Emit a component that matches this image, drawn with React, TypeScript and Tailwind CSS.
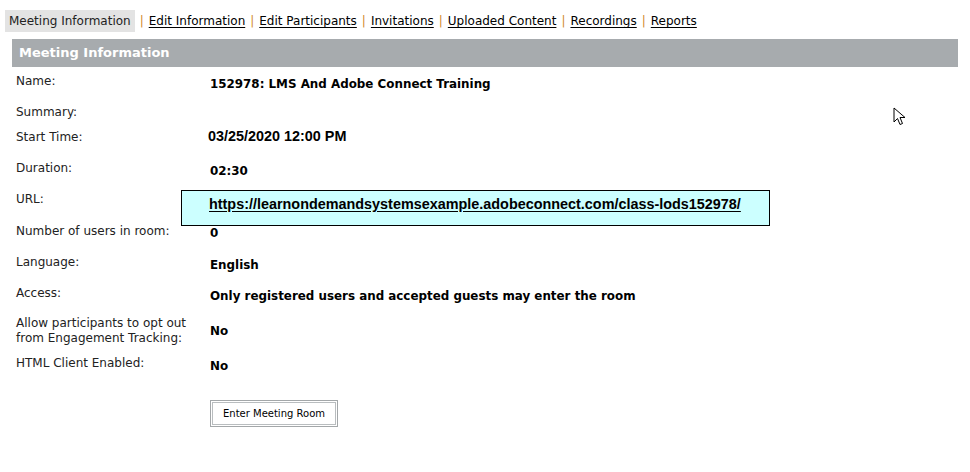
import React from "react";

const tabs = [
    "Edit Information",
    "Edit Participants",
    "Invitations",
    "Uploaded Content",
    "Recordings",
    "Reports",
];

function Row({
    label,
    h,
    children,
    valueClass = "",
}: {
    label: React.ReactNode;
    h: string;
    children?: React.ReactNode;
    valueClass?: string;
}) {
    return (
        <div className={`flex ${h}`}>
            <div className="w-[194px] shrink-0 pl-[16px] text-[12px] leading-[15px] text-[#222]">{label}</div>
            <div className={`flex-1 text-[11.9px] font-bold text-black ${valueClass}`}>{children}</div>
        </div>
    );
}

export default function App() {
    return (
        <div className="relative h-[472px] w-[970px] bg-white font-['DejaVu_Sans',sans-serif]">
            {/* tabs */}
            <div className="flex items-center pl-[5px] pt-[10px] text-[12px] leading-[22px]">
                <span className="bg-[#e3e3e3] px-[4px] text-[#222]">Meeting Information</span>
                {tabs.map((t) => (
                    <React.Fragment key={t}>
                        <span className="px-[5px] text-[#d08a2c]">|</span>
                        <a href="#" className="text-black underline underline-offset-2">{t}</a>
                    </React.Fragment>
                ))}
            </div>

            {/* header */}
            <div className="mx-[12px] mt-[7px] h-[28px] bg-[#a7abae] pl-[7px] text-[13px] font-bold leading-[28px] text-white">
                Meeting Information
            </div>

            <div className="pt-[7px]">
                <Row label="Name:" h="h-[31px]" valueClass="pt-[2px] pl-[16px]">152978: LMS And Adobe Connect Training</Row>
                <Row label="Summary:" h="h-[25px]" />
                <Row label="Start Time:" h="h-[31px]" valueClass="-mt-[2px] pl-[14px] font-['Liberation_Sans',sans-serif] text-[14.4px] leading-[17px]">03/25/2020 12:00 PM</Row>
                <Row label="Duration:" h="h-[31px]" valueClass="pt-[2px] pl-[16px]">02:30</Row>
                <div className="flex h-[32px]">
                    <div className="w-[181px] shrink-0 pl-[16px] text-[12px] leading-[15px] text-[#222]">URL:</div>
                    <div className="-mt-[2px] h-[36px] w-[589px] shrink-0 border border-black bg-[#ccffff] pl-[27px] pt-[3px] font-['Liberation_Sans',sans-serif] text-[14.4px] font-bold">
                        <a href="#" className="text-black underline underline-offset-2">
                            https://learnondemandsystemsexample.adobeconnect.com/class-lods152978/
                        </a>
                    </div>
                </div>
                <Row label="Number of users in room:" h="h-[31px]" valueClass="pt-[1px] pl-[16px]">0</Row>
                <Row label="Language:" h="h-[31px]" valueClass="pt-[2px] pl-[16px]">English</Row>
                <Row label="Access:" h="h-[30px]" valueClass="pt-[2px] pl-[16px]">Only registered users and accepted guests may enter the room</Row>
                <Row
                    label={<>Allow participants to opt out<br />from Engagement Tracking:</>}
                    h="h-[40px]"
                    valueClass="pt-[7px] pl-[16px]"
                >
                    No
                </Row>
                <Row label="HTML Client Enabled:" h="h-[44px]" valueClass="pt-[2px] pl-[16px]">No</Row>
            </div>

            <div className="pl-[210px]">
                <button className="border border-[#a3a7a9] p-[1px]">
                    <span className="block border border-[#b9bdbf] px-[10px] py-[4px] text-[10px] leading-[13px] text-black">
                        Enter Meeting Room
                    </span>
                </button>
            </div>

            {/* mouse cursor */}
            <svg className="absolute left-[893px] top-[107px]" width="14" height="20" viewBox="0 0 14 20">
                <path d="M1 1 L1 15 L4.5 11.5 L7 17.5 L9.5 16.5 L7 10.5 L12 10.5 Z" fill="white" stroke="black" strokeWidth="1" />
            </svg>
        </div>
    );
}
